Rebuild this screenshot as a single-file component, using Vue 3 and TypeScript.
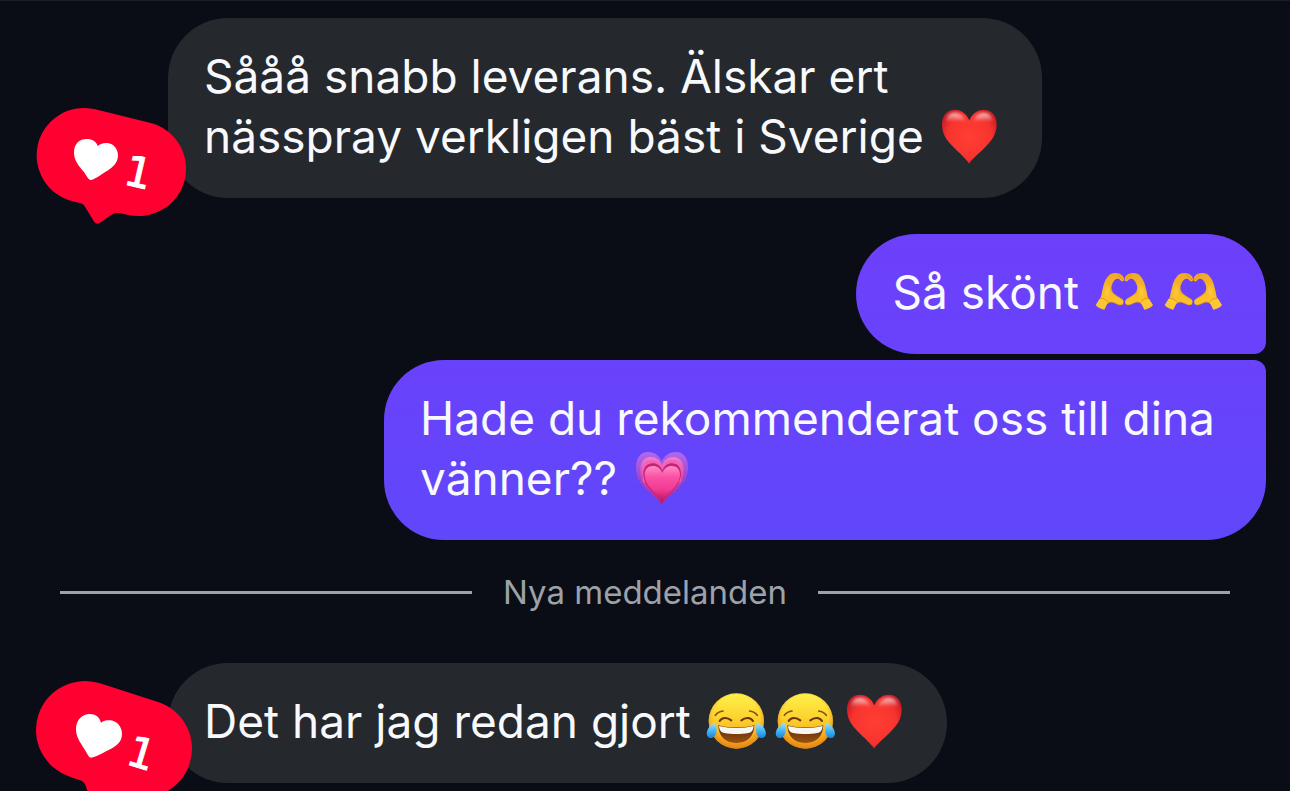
<script setup lang="ts">
type EmojiName = 'heart' | 'hands' | 'growing' | 'joy'

interface Line {
  text: string
  emojis: EmojiName[]
}

interface Message {
  id: number
  side: 'in' | 'out'
  shape: string
  lines: Line[]
  badge?: 'first' | 'second'
}

const earlier: Message[] = [
  {
    id: 1,
    side: 'in',
    shape: 'single',
    badge: 'first',
    lines: [
      { text: 'Sååå snabb leverans. Älskar ert', emojis: [] },
      { text: 'nässpray verkligen bäst i Sverige', emojis: ['heart'] },
    ],
  },
  { id: 2, side: 'out', shape: 'start', lines: [{ text: 'Så skönt', emojis: ['hands', 'hands'] }] },
  {
    id: 3,
    side: 'out',
    shape: 'end',
    lines: [
      { text: 'Hade du rekommenderat oss till dina', emojis: [] },
      { text: 'vänner??', emojis: ['growing'] },
    ],
  },
]

const fresh: Message[] = [
  {
    id: 4,
    side: 'in',
    shape: 'single',
    badge: 'second',
    lines: [{ text: 'Det har jag redan gjort', emojis: ['joy', 'joy', 'heart'] }],
  },
]

const groups = [
  { id: 'earlier', messages: earlier },
  { id: 'fresh', messages: fresh },
]

const viewBoxes: Record<EmojiName, string> = {
  heart: '30 39 192 180',
  hands: '21 12 192 180',
  growing: '30 30 192 180',
  joy: '15 39 192 180',
}

const labels: Record<EmojiName, string> = {
  heart: 'Rött hjärta',
  hands: 'Händer som formar ett hjärta',
  growing: 'Växande hjärta',
  joy: 'Skrattar med glädjetårar',
}
</script>

<template>
  <main class="chat">
    <svg class="defs" aria-hidden="true">
      <defs>
        <filter id="soft" x="-20%" y="-20%" width="140%" height="140%">
          <feGaussianBlur stdDeviation="4" />
        </filter>
        <radialGradient id="redFill" cx="0.5" cy="0.5" r="0.62">
          <stop offset="0" stop-color="#ff3f33" />
          <stop offset="0.65" stop-color="#f8332f" />
          <stop offset="1" stop-color="#bd1420" />
        </radialGradient>
        <linearGradient id="shine" x1="0" y1="0" x2="0" y2="1">
          <stop offset="0" stop-color="#fff" stop-opacity="0.75" />
          <stop offset="1" stop-color="#fff" stop-opacity="0" />
        </linearGradient>
        <linearGradient id="pinkFill" x1="0" y1="0" x2="0" y2="1">
          <stop offset="0" stop-color="#ff8fc4" />
          <stop offset="0.3" stop-color="#fb50a5" />
          <stop offset="0.65" stop-color="#ef3a93" />
          <stop offset="1" stop-color="#b80f55" />
        </linearGradient>
        <linearGradient id="pinkMid" x1="0" y1="0" x2="0" y2="1">
          <stop offset="0" stop-color="#f07fd0" />
          <stop offset="0.4" stop-color="#dd48aa" />
          <stop offset="1" stop-color="#a82a92" />
        </linearGradient>
        <linearGradient id="pinkOuter" x1="0" y1="0" x2="0" y2="1">
          <stop offset="0" stop-color="#b168ee" />
          <stop offset="0.45" stop-color="#a248d0" />
          <stop offset="1" stop-color="#8030cc" />
        </linearGradient>
        <linearGradient id="faceFill" x1="0" y1="0" x2="0" y2="1">
          <stop offset="0" stop-color="#fff04a" />
          <stop offset="0.45" stop-color="#fdd22f" />
          <stop offset="1" stop-color="#f2921c" />
        </linearGradient>
        <radialGradient id="faceEdge" cx="0.5" cy="0.45" r="0.56">
          <stop offset="0.75" stop-color="#e08a12" stop-opacity="0" />
          <stop offset="1" stop-color="#d77f10" stop-opacity="0.75" />
        </radialGradient>
        <linearGradient id="mouthFill" x1="0" y1="0" x2="0" y2="1">
          <stop offset="0" stop-color="#5b2a0c" />
          <stop offset="1" stop-color="#9a5010" />
        </linearGradient>
        <linearGradient id="tearFill" x1="0" y1="0" x2="0" y2="1">
          <stop offset="0" stop-color="#9ce0fb" />
          <stop offset="0.6" stop-color="#38adf0" />
          <stop offset="1" stop-color="#1b84d8" />
        </linearGradient>
        <linearGradient id="handFill" x1="0" y1="0" x2="0" y2="1">
          <stop offset="0" stop-color="#f0a827" />
          <stop offset="0.6" stop-color="#f9b829" />
          <stop offset="1" stop-color="#fdc42c" />
        </linearGradient>
      </defs>
    </svg>

    <template v-for="group in groups" :key="group.id">
      <div v-if="group.id === 'fresh'" class="divider" role="separator">
        <span class="rule"></span>
        <span class="divider-text">Nya meddelanden</span>
        <span class="rule"></span>
      </div>

      <section class="group">
        <article v-for="m in group.messages" :key="m.id" class="row" :class="[m.side, m.shape]">
          <div class="bubble">
            <p v-for="(line, i) in m.lines" :key="i" class="line">
              <span class="words">{{ line.text }}</span>
              <svg
                v-for="(e, k) in line.emojis"
                :key="k"
                class="emoji"
                :viewBox="viewBoxes[e]"
                role="img"
                :aria-label="labels[e]"
              >
                <template v-if="e === 'heart'">
                  <path d="M126 206C119 193 103 179 84 161C60 138 45 119 45 88C45 61 60 44 84 44C104 44 119 57 127 76C135 57 150 44 170 44C194 44 209 61 209 88C209 119 194 138 170 161C151 179 134 193 126 206Z" fill="url(#redFill)" />
                  <path d="M56 82C58 62 68 53 84 53C100 53 112 64 116 82C100 74 76 73 56 82Z" fill="url(#shine)" filter="url(#soft)" />
                  <path d="M198 82C196 62 186 53 170 53C154 53 142 64 138 82C154 74 178 73 198 82Z" fill="url(#shine)" filter="url(#soft)" />
                </template>

                <template v-else-if="e === 'growing'">
                  <path d="M125 195C118 181 100 169 82 152C59 130 48 112 48 82C48 53 62 36 84 36C105 36 118 48 125 64C133 48 147 36 168 36C190 36 204 53 204 82C204 112 192 130 169 152C151 169 132 181 125 195Z" fill="url(#pinkOuter)" />
                  <path d="M125 193C116 178 101 168 87 151C69 132 61 117 61 92C61 66 73 51 92 51C108 51 120 60 126 76C132 60 144 51 160 51C179 51 191 66 191 92C191 117 182 132 165 151C150 168 134 178 125 193Z" fill="url(#pinkMid)" />
                  <path d="M67 88C70 68 81 59 96 60C112 61 121 70 126 85C131 70 141 61 156 60C171 59 182 68 185 88L182 127H70Z" fill="#f562b4" />
                  <path d="M125 191C119 174 106 165 94 152C79 135 70 120 70 101C70 82 82 70 98 70C111 70 121 77 127 92C133 77 143 70 156 70C172 70 183 82 183 101C183 120 173 135 159 152C146 166 132 177 125 191Z" fill="#c5207a" />
                  <path d="M125 188C119 173 108 163 96 150C82 134 74 120 74 104C74 88 84 78 99 78C112 78 122 86 127 99C132 86 142 78 155 78C170 78 180 88 180 104C180 120 171 134 157 150C145 164 132 174 125 188Z" fill="url(#pinkFill)" />
                </template>

                <template v-else-if="e === 'hands'">
                  <g v-for="flip in [false, true]" :key="String(flip)" :transform="flip ? 'translate(236 0) scale(-1 1)' : undefined">
                    <path d="M46 116C50 108 49 98 54 83C58 65 65 50 77 42C89 37 103 39 111 46C117 51 119 61 115 64C110 66 107 61 102 57C94 54 87 60 83 69C78 79 78 88 82 96C88 104 100 110 111 117C117 121 117 129 112 134C105 138 96 132 86 128C77 125 71 127 66 133Z" fill="url(#handFill)" />
                    <path d="M81 92C84 103 97 110 110 117" fill="none" stroke="#d48b1b" stroke-width="2" stroke-linecap="round" />
                    <path d="M98 46C104 48 109 52 113 59" fill="none" stroke="#d68a14" stroke-width="2" stroke-linecap="round" />
                    <path d="M67 131C72 126 78 125 86 128C96 132 105 138 112 134" fill="none" stroke="#c98225" stroke-width="2" stroke-linecap="round" />
                    <path d="M67 72C61 86 58 102 64 111C71 108 74 98 72 84" fill="#ffd645" opacity="0.7" filter="url(#soft)" />
                    <path d="M44 116L32 135C37 143 48 147 58 149L69 127C61 119 53 115 44 116Z" fill="#fdc633" />
                    <path d="M45 115C54 114 62 118 70 127" fill="none" stroke="#e09716" stroke-width="3" />
                  </g>
                </template>

                <template v-else>
                  <circle cx="112" cy="123" r="83" fill="url(#faceFill)" />
                  <circle cx="112" cy="123" r="83" fill="url(#faceEdge)" />
                  <path d="M49 106C54 99 61 94 72 93M175 106C170 99 163 94 152 93" fill="none" stroke="#8a520c" stroke-width="5" stroke-linecap="round" />
                  <path d="M62 123C69 112 84 111 97 121M127 121C140 111 155 112 162 123" fill="none" stroke="#68370a" stroke-width="6" stroke-linecap="round" />
                  <path d="M58 136C88 145 136 145 166 136C165 169 145 189 112 189C79 189 59 169 58 136Z" fill="url(#mouthFill)" />
                  <path d="M60 138C91 146 133 146 164 138C163 151 158 157 148 159C126 163 98 163 76 159C66 157 61 151 60 138Z" fill="#f7f6f0" />
                  <path d="M51 130C37 132 28 141 24 155C21 167 28 175 38 174C50 172 56 157 51 130Z" fill="url(#tearFill)" />
                  <path d="M173 130C187 132 196 141 200 155C203 167 196 175 186 174C174 172 168 157 173 130Z" fill="url(#tearFill)" />
                </template>
              </svg>
            </p>
          </div>

          <svg v-if="m.badge === 'first'" class="badge badge-first" viewBox="48 54 450 348" role="img" aria-label="1 gillamarkering">
            <path d="M150 328C175 338 187 336 195 350L221 393C226 402 234 404 242 397L272 376C286 366 300 369 322 374L340 300L180 280Z" fill="#ff0030" />
            <line x1="192" y1="196" x2="356" y2="236" stroke="#ff0030" stroke-width="284" stroke-linecap="round" />
            <path d="M212 270C204 269 200 257 190 244C174 224 162 210 162 188C162 160 180 147 200 147C216 147 229 154 233 168C242 160 252 158 262 159C282 161 294 178 294 196C294 218 280 231 262 242C245 252 225 268 212 270Z" fill="#fff" />
            <text class="count" x="346" y="290" text-anchor="middle" transform="rotate(13 346 290)">1</text>
          </svg>
          <svg v-if="m.badge === 'second'" class="badge badge-second" viewBox="48 62 468 396" role="img" aria-label="1 gillamarkering">
            <path d="M140 344C170 360 187 355 195 372L214 423C219 434 228 436 237 428L270 406C284 396 300 404 324 407L340 300L180 280Z" fill="#ff0030" />
            <line x1="195" y1="209" x2="369" y2="265" stroke="#ff0030" stroke-width="294" stroke-linecap="round" />
            <path d="M212 292C205 290 202 280 193 266C178 243 168 228 168 207C168 177 188 161 209 161C227 161 239 171 243 187C252 180 262 179 271 180C292 182 306 200 306 221C306 244 291 256 272 266C252 275 230 291 212 292Z" fill="#fff" />
            <text class="count" x="352" y="321" text-anchor="middle" transform="rotate(17 352 321)">1</text>
          </svg>
        </article>
      </section>
    </template>
  </main>
</template>

<style>
body {
  margin: 0;
  background: #0a0d15;
}
</style>

<style scoped>
.chat {
  box-sizing: border-box;
  min-height: 100vh;
  padding: 17px 24px 8px 36px;
  border-top: 1px solid #1b1d20;
  overflow: hidden;
  background: #0a0d15;
  color: #f7f9fc;
  font-family: Inter, "Liberation Sans", sans-serif;
  font-size: 46px;
  line-height: 56px;
}

.defs {
  position: absolute;
  width: 0;
  height: 0;
}

.group {
  display: flex;
  flex-direction: column;
}

.row {
  position: relative;
  display: flex;
}

.row.in {
  padding-left: 132px;
}

.row.out {
  justify-content: flex-end;
}

.row.in + .row.out {
  margin-top: 36px;
}

.row.out + .row.out {
  margin-top: 6px;
}

.bubble {
  box-sizing: border-box;
  padding: 30px 36px;
  border-radius: 60px;
  background: #25282d;
}

.start .bubble {
  border-bottom-right-radius: 12px;
  background: linear-gradient(#6d40fb, #6942fb);
}

.end .bubble {
  width: 882px;
  max-width: 100%;
  border-top-right-radius: 12px;
  background: linear-gradient(#6942fb, #6047fa);
}

.line {
  display: flex;
  align-items: flex-start;
  min-height: 60px;
  margin: 0;
  white-space: nowrap;
}

.emoji {
  flex: none;
  width: 64px;
  height: 60px;
  margin-right: 5px;
}

.words + .emoji {
  margin-left: 13px;
}

.badge {
  position: absolute;
  left: 0;
}

.badge-first {
  top: 90px;
  width: 150px;
  height: 116px;
}

.badge-second {
  top: 18px;
  width: 156px;
  height: 132px;
}

.count {
  fill: #fff;
  stroke: #fff;
  stroke-width: 3px;
  font-family: "DejaVu Sans", sans-serif;
  font-size: 126px;
}

.divider {
  display: flex;
  align-items: center;
  gap: 31px;
  height: 60px;
  margin: 22px 36px 41px 24px;
}

.rule {
  flex: 1;
  height: 3px;
  background: #9da1a8;
}

.divider-text {
  color: #9da1a8;
  font-size: 33px;
}
</style>
